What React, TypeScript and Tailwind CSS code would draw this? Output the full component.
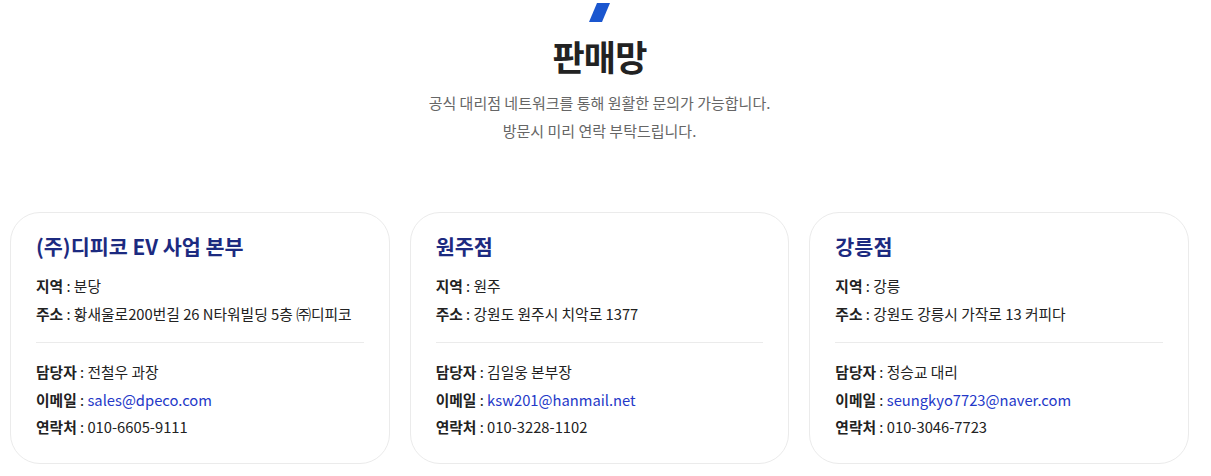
import React from 'react';

interface Dealer {
  name: string;
  region: string;
  address: string;
  manager: string;
  email: string;
  phone: string;
}

const dealers: Dealer[] = [
  {
    name: '(주)디피코 EV 사업 본부',
    region: '분당',
    address: '황새울로200번길 26 N타워빌딩 5층 ㈜디피코',
    manager: '전철우 과장',
    email: 'sales@dpeco.com',
    phone: '010-6605-9111',
  },
  {
    name: '원주점',
    region: '원주',
    address: '강원도 원주시 치악로 1377',
    manager: '김일웅 본부장',
    email: 'ksw201@hanmail.net',
    phone: '010-3228-1102',
  },
  {
    name: '강릉점',
    region: '강릉',
    address: '강원도 강릉시 가작로 13 커피다',
    manager: '정승교 대리',
    email: 'seungkyo7723@naver.com',
    phone: '010-3046-7723',
  },
];

function Row({ label, children, tight }: { label: string; children: React.ReactNode; tight?: boolean }) {
  return (
    <p className={tight ? 'text-[14.75px] leading-[27.5px] text-[#222]' : 'text-[14.75px] leading-[28px] text-[#222]'}>
      <span className="font-bold">{label}</span> : {children}
    </p>
  );
}

function DealerCard({ dealer }: { dealer: Dealer }) {
  return (
    <div className="bg-white border border-[#ebebeb] rounded-[30px] px-[25px] pt-[18px] pb-[22px]">
      <h3 className="text-[20.7px] leading-[30px] font-bold text-[#1c2a80] mb-[11px]">{dealer.name}</h3>
      <Row label="지역">{dealer.region}</Row>
      <Row label="주소">{dealer.address}</Row>
      <div className="h-px bg-[#ebebeb] mt-[14px] mb-[15px]"></div>
      <Row label="담당자" tight>{dealer.manager}</Row>
      <Row label="이메일" tight>
        <a className="text-[#2438c8]">{dealer.email}</a>
      </Row>
      <Row label="연락처" tight>{dealer.phone}</Row>
    </div>
  );
}

export default function App() {
  return (
    <div
      className="min-h-screen bg-white"
      style={{ fontFamily: '"Noto Sans CJK KR", "Noto Sans", sans-serif' }}
    >
      <div className="w-[1179px] ml-[10px]">
        {/* 타이틀 */}
        <div className="flex flex-col items-center pt-[3px]">
          <svg width="21" height="19" viewBox="0 0 21 19">
            <polygon points="8,0 21,0 13,19 0,19" fill="#1a56cf" />
          </svg>
          <h2 className="mt-[14px] text-[35px] leading-[40px] font-bold text-[#222] tracking-tight">판매망</h2>
          <p className="mt-[13px] text-[15px] leading-[28px] text-[#666] text-center">
            공식 대리점 네트워크를 통해 원활한 문의가 가능합니다.
            <br />
            방문시 미리 연락 부탁드립니다.
          </p>
        </div>

        {/* 대리점 목록 */}
        <div className="grid grid-cols-3 gap-[20px] mt-[67px]">
          {dealers.map((d) => (
            <DealerCard key={d.name} dealer={d} />
          ))}
        </div>
      </div>
    </div>
  );
}
